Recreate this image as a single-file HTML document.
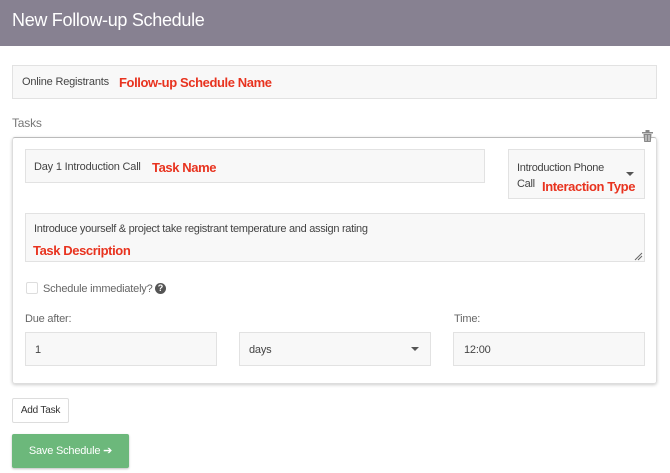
<!DOCTYPE html><html><head><style>
body{margin:0;width:670px;height:473px;background:#fff;font-family:"Liberation Sans",sans-serif;position:relative;overflow:hidden;color:#444;letter-spacing:-0.2px}
.a{position:absolute;box-sizing:border-box;white-space:nowrap}
.in{background:#f8f8f8;border:1px solid #e2e2e2;font-size:11px;color:#444}
.red{color:#e8331f;font-weight:bold;font-size:13px;letter-spacing:-0.4px}
</style></head><body>
<div class="a" style="left:0;top:0;width:670px;height:46px;background:#878191"></div>
<div class="a" style="left:12px;top:10px;font-size:18px;color:#fff;letter-spacing:-0.3px">New Follow-up Schedule</div>
<div class="a in" style="left:12px;top:65px;width:645px;height:34px"></div>
<div class="a" style="left:22px;top:76px;font-size:11px">Online Registrants</div>
<div class="a red" style="left:119px;top:75px">Follow-up Schedule Name</div>
<div class="a" style="left:12px;top:116px;font-size:12px;color:#777">Tasks</div>
<div class="a" style="left:12px;top:137px;width:645px;height:247px;border:1px solid #ddd;border-top:1.5px solid #bbb;border-radius:3px;box-shadow:0 1px 3px rgba(0,0,0,.2)"></div>
<svg class="a" style="left:642px;top:130px" width="11" height="12" viewBox="0 0 11 12"><rect x="0" y="2" width="11" height="1.5" fill="#888"/><rect x="3.5" y="0" width="4" height="2" fill="#888"/><path d="M1.5 4h8l-.7 8h-6.6z" fill="#888"/><path d="M4 5v6M7 5v6" stroke="#fff" stroke-width=".8"/></svg>
<div class="a in" style="left:25px;top:149px;width:460px;height:34px"></div>
<div class="a" style="left:34px;top:161px;font-size:11px">Day 1 Introduction Call</div>
<div class="a red" style="left:152px;top:160px">Task Name</div>
<div class="a in" style="left:508px;top:149px;width:137px;height:50px"></div>
<div class="a" style="left:517px;top:160px;font-size:11px;line-height:16px;letter-spacing:-0.3px">Introduction Phone<br>Call</div>
<div class="a red" style="left:542px;top:179px">Interaction Type</div>
<div class="a" style="left:626px;top:172px;width:0;height:0;border-left:4px solid transparent;border-right:4px solid transparent;border-top:4px solid #555"></div>
<div class="a in" style="left:25px;top:213px;width:620px;height:49px"></div>
<div class="a" style="left:34px;top:223px;font-size:11px;letter-spacing:-0.3px">Introduce yourself &amp; project take registrant temperature and assign rating</div>
<div class="a red" style="left:33px;top:243px">Task Description</div>
<svg class="a" style="left:634px;top:252px" width="9" height="9"><path d="M1 8L8 1M4 8L8 4" stroke="#666"/></svg>
<div class="a" style="left:26px;top:282px;width:12px;height:12px;border:1px solid #ddd;border-radius:2px"></div>
<div class="a" style="left:43px;top:283px;font-size:11px;color:#666">Schedule immediately?</div>
<div class="a" style="left:155px;top:283px;width:11px;height:11px;border-radius:50%;background:#555;color:#fff;font-size:9px;font-weight:bold;text-align:center;line-height:11px;letter-spacing:0">?</div>
<div class="a" style="left:25px;top:313px;font-size:11px;color:#666">Due after:</div>
<div class="a" style="left:454px;top:313px;font-size:11px;color:#666">Time:</div>
<div class="a in" style="left:25px;top:332px;width:192px;height:34px;padding:11px 0 0 9px">1</div>
<div class="a in" style="left:239px;top:332px;width:192px;height:34px;padding:11px 0 0 9px">days</div>
<div class="a" style="left:411px;top:347px;width:0;height:0;border-left:4px solid transparent;border-right:4px solid transparent;border-top:4px solid #555"></div>
<div class="a in" style="left:453px;top:332px;width:192px;height:34px;padding:11px 0 0 10px">12:00</div>
<div class="a" style="left:12px;top:398px;width:57px;height:25px;border:1px solid #ddd;border-radius:2px;font-size:10px;text-align:center;line-height:23px;color:#333">Add Task</div>
<div class="a" style="left:12px;top:434px;width:117px;height:34px;background:#6cb87b;border-radius:2px;color:#fff;font-size:11px;text-align:center;line-height:34px;box-shadow:0 1px 2px rgba(0,0,0,.25)">Save Schedule ➔</div>
</body></html>
